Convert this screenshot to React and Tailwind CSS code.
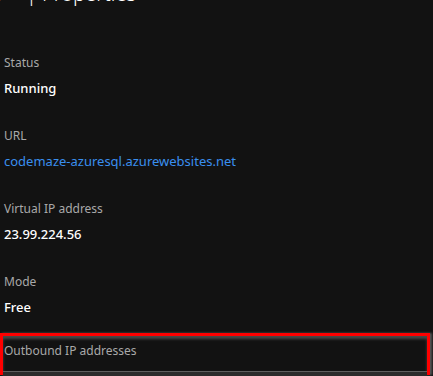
import React from 'react';

const fields = [
  { label: 'Status', value: 'Running' },
  { label: 'URL', value: 'codemaze-azuresql.azurewebsites.net', link: true },
  { label: 'Virtual IP address', value: '23.99.224.56' },
  { label: 'Mode', value: 'Free', last: true },
];

const Field = ({ label, value, link, last }) => (
  <div className={`${last ? 'h-[62px]' : 'h-[73px]'} pl-[4px]`}>
    <div className="h-[26px] pt-[2px] text-[12px] leading-[18px] text-[#a9a9a9]">{label}</div>
    <div className={`text-[13px] leading-[20px] ${link ? 'text-[#3a8fef]' : 'text-white font-medium'}`}>
      {value}
    </div>
  </div>
);

export default function App() {
  return (
    <div className="w-[433px] h-[376px] overflow-hidden bg-[#121212] font-['Noto_Sans',sans-serif]">
      <div className="h-[73px] -mt-[21px] flex items-baseline text-[20px] leading-[30px] font-light text-white whitespace-nowrap">
        <span className="w-[12px] -ml-[7px] shrink-0">1</span>
        <span className="ml-[21px]">| Properties</span>
      </div>
      <div className="flex flex-col">
        {fields.map((f) => (
          <Field key={f.label} {...f} />
        ))}
      </div>
      <div className="w-[430px] h-[42px] border-t-[3px] border-l-[3px] border-r-[3px] border-[#ff0000] shadow-[2px_0_2px_#555]">
        <div className="h-[35px] pl-[1px] pt-[6px] shadow-[inset_0_3px_3px_#4a4a4a] text-[12px] leading-[18px] text-[#a9a9a9]">
          Outbound IP addresses
        </div>
        <div className="h-[1px] bg-[#5e5e5e]" />
        <div className="h-[5px] bg-[#2b2b2b]" />
      </div>
    </div>
  );
}
